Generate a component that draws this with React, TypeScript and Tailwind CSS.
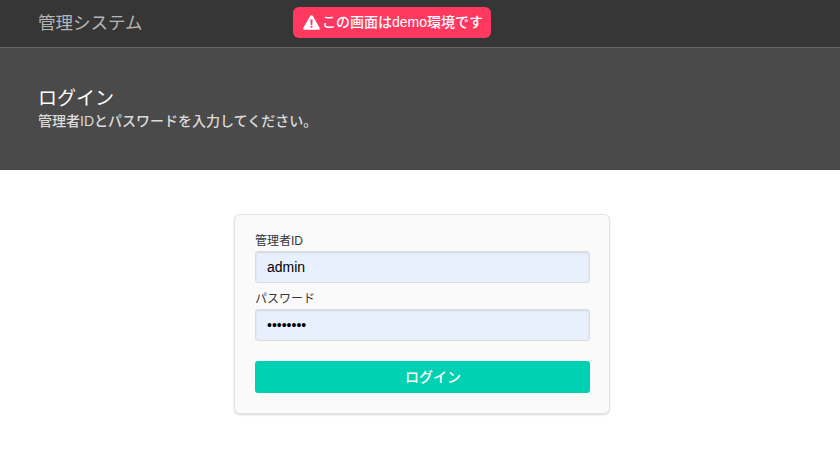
import * as React from "react";

const FONT = "font-['Liberation_Sans','Noto_Sans_CJK_JP',sans-serif]";

const WarningIcon = () => (
    <svg width="17" height="15" viewBox="0 0 17 15" className="flex-none">
        <path
            fillRule="evenodd"
            fill="#fff"
            d="M8.5 0.3c.6 0 1.1.3 1.4.8l6.7 11.6c.6 1-.1 2.1-1.3 2.1H1.7c-1.2 0-1.9-1.1-1.3-2.1L7.1 1.1c.3-.5.8-.8 1.4-.8zM7.4 4.6l.3 5.3h1.6l.3-5.3H7.4zM8.5 10.7c-.6 0-1.1.5-1.1 1.1s.5 1.1 1.1 1.1 1.1-.5 1.1-1.1-.5-1.1-1.1-1.1z"
        />
    </svg>
);

type FieldProps = {
    label: string;
    type: string;
    value: string;
};

const Field: React.FC<FieldProps> = ({ label, type, value }) => (
    <div className="mb-[7px]">
        <label className="block text-[12px] leading-[18px] text-[#363636] mb-[1px]">{label}</label>
        <input
            readOnly
            type={type}
            value={value}
            className="block w-full h-[32px] px-[11px] text-[14px] text-black bg-[#e8f0fe] border border-[#dbdbdb] rounded-[3px] shadow-[inset_0_1px_2px_rgba(10,10,10,0.1)] outline-none"
        />
    </div>
);

export default function App() {
    return (
        <div className={`${FONT} min-h-[464px] bg-white`}>
            <header className="flex items-center h-[48px] bg-[#363636] border-b border-[#666666] pl-[38px]">
                <div className="w-[255px] text-[17.5px] text-[#b5b5b5]">管理システム</div>
                <div className="flex items-center gap-[2px] h-[31px] mb-[2px] pl-[10px] pr-[8px] rounded-[6px] bg-[#ff3860] text-white text-[14px] font-medium">
                    <WarningIcon />
                    <span>この画面はdemo環境です</span>
                </div>
            </header>
            <section className="h-[122px] bg-[#4a4a4a] pl-[38px] pt-[39px]">
                <h1 className="text-[19px] leading-[24px] text-white">ログイン</h1>
                <p className="text-[14px] leading-[18px] mt-[1px] font-medium text-[#dbdbdb]">管理者IDとパスワードを入力してください。</p>
            </section>
            <main className="flex justify-center pt-[44px]">
                <div className="w-[376px] ml-[4px] pl-[20px] pr-[19px] pt-[17px] pb-[20px] bg-[#fafafa] border border-[#e4e4e4] rounded-[6px] shadow-[0_1px_2px_rgba(10,10,10,0.16)]">
                    <Field label="管理者ID" type="text" value="admin" />
                    <Field label="パスワード" type="password" value="password" />
                    <button className="block w-full h-[32px] mt-[20px] pl-[21px] rounded-[3px] bg-[#00d1b2] text-white text-[14px] font-medium">
                        ログイン
                    </button>
                </div>
            </main>
        </div>
    );
}
